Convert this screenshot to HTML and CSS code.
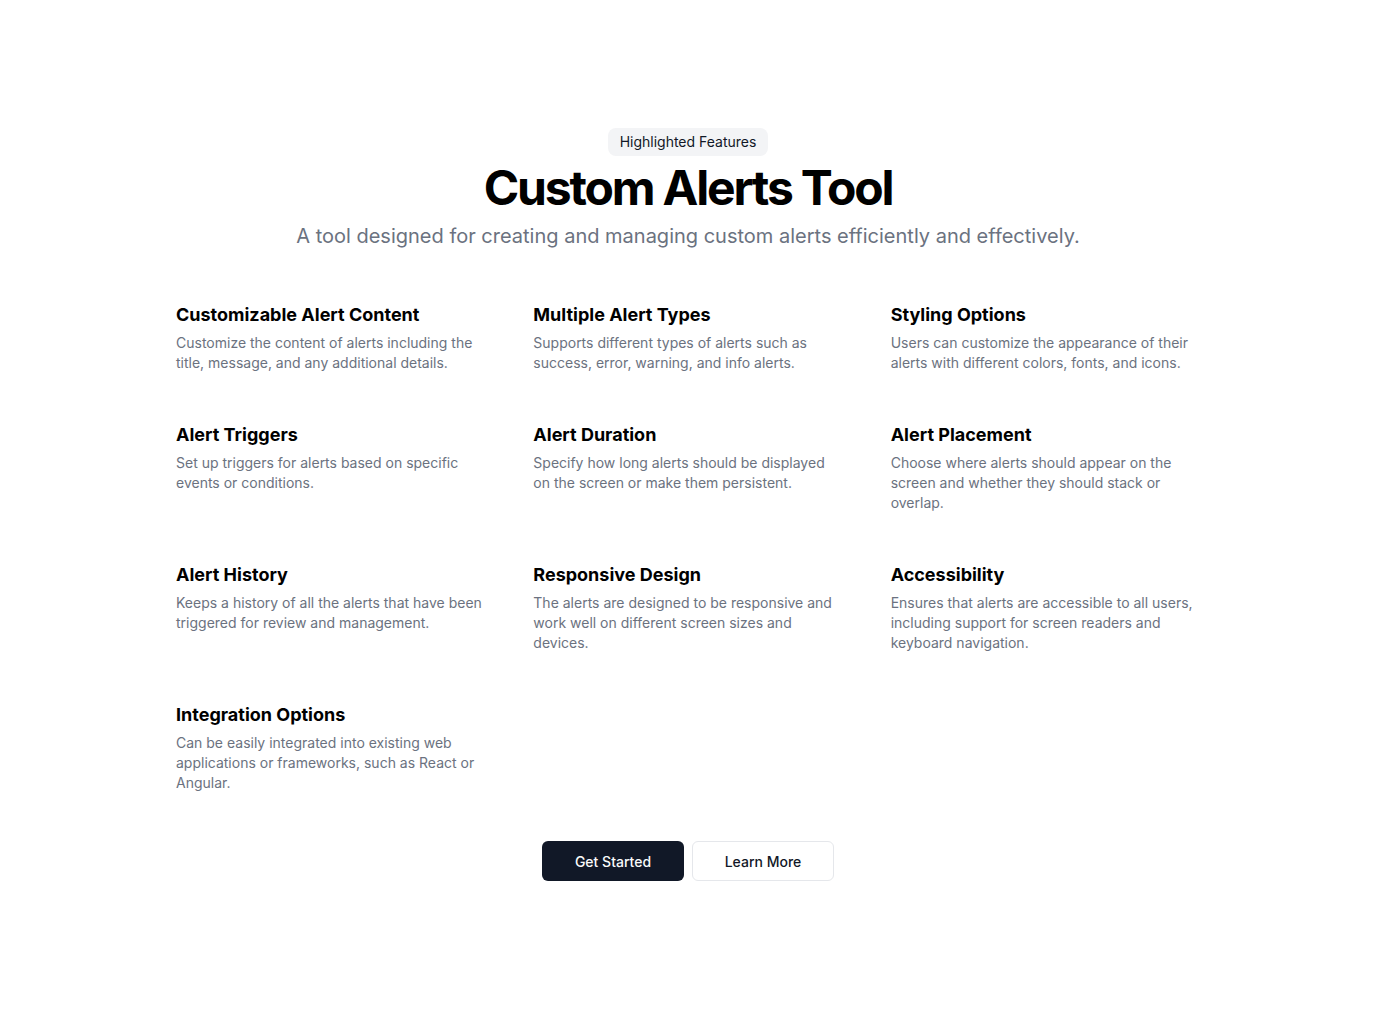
FILE: index.html
```html
<!DOCTYPE html>
<html lang="en">
<head>
<meta charset="utf-8">
<title>Custom Alerts Tool</title>
<link rel="stylesheet" href="styles.css">
</head>
<body>
<section class="section">
  <div class="container">
    <header class="header">
      <span class="badge">Highlighted Features</span>
      <h1 class="title">Custom Alerts Tool</h1>
      <p class="subtitle">A tool designed for creating and managing custom alerts efficiently and effectively.</p>
    </header>
    <div class="grid">
      <div class="feature">
        <h3 class="feature-title">Customizable Alert Content</h3>
        <p class="feature-text">Customize the content of alerts including the title, message, and any additional details.</p>
      </div>
      <div class="feature">
        <h3 class="feature-title">Multiple Alert Types</h3>
        <p class="feature-text">Supports different types of alerts such as success, error, warning, and info alerts.</p>
      </div>
      <div class="feature">
        <h3 class="feature-title">Styling Options</h3>
        <p class="feature-text">Users can customize the appearance of their alerts with different colors, fonts, and icons.</p>
      </div>
      <div class="feature">
        <h3 class="feature-title">Alert Triggers</h3>
        <p class="feature-text">Set up triggers for alerts based on specific events or conditions.</p>
      </div>
      <div class="feature">
        <h3 class="feature-title">Alert Duration</h3>
        <p class="feature-text">Specify how long alerts should be displayed on the screen or make them persistent.</p>
      </div>
      <div class="feature">
        <h3 class="feature-title">Alert Placement</h3>
        <p class="feature-text">Choose where alerts should appear on the screen and whether they should stack or overlap.</p>
      </div>
      <div class="feature">
        <h3 class="feature-title">Alert History</h3>
        <p class="feature-text">Keeps a history of all the alerts that have been triggered for review and management.</p>
      </div>
      <div class="feature">
        <h3 class="feature-title">Responsive Design</h3>
        <p class="feature-text">The alerts are designed to be responsive and work well on different screen sizes and devices.</p>
      </div>
      <div class="feature">
        <h3 class="feature-title">Accessibility</h3>
        <p class="feature-text">Ensures that alerts are accessible to all users, including support for screen readers and keyboard navigation.</p>
      </div>
      <div class="feature">
        <h3 class="feature-title">Integration Options</h3>
        <p class="feature-text">Can be easily integrated into existing web applications or frameworks, such as React or Angular.</p>
      </div>
    </div>
    <div class="actions">
      <a class="btn btn-primary" href="#">Get Started</a>
      <a class="btn btn-outline" href="#">Learn More</a>
    </div>
  </div>
</section>
</body>
</html>
```
FILE: styles.css
```css
* { box-sizing: border-box; }
html, body { margin: 0; padding: 0; background: #fff; }
body {
  font-family: Inter, "Noto Sans", "Liberation Sans", sans-serif;
  color: #030712;
}
.section { padding: 128px 0; }
.container {
  width: 1024px;
  margin: 0 auto;
}
.header {
  display: flex;
  flex-direction: column;
  align-items: center;
  text-align: center;
  gap: 8px;
}
.badge {
  display: inline-block;
  background: #f3f4f6;
  border-radius: 8px;
  padding: 4px 12px;
  font-size: 14px;
  line-height: 20px;
  color: #111827;
}
.title {
  margin: 0;
  font-size: 48px;
  line-height: 48px;
  font-weight: 700;
  letter-spacing: -0.045em;
  color: #000;
}
.subtitle {
  margin: 2px 0 0;
  font-size: 20px;
  line-height: 28px;
  color: #6b7280;
  width: 900px;
}
.grid {
  margin-top: 51px;
  display: grid;
  grid-template-columns: repeat(3, 1fr);
  gap: 48px;
}
.feature {
  display: flex;
  flex-direction: column;
  gap: 4px;
}
.feature-title {
  margin: 0;
  font-size: 18px;
  line-height: 28px;
  font-weight: 700;
  color: #000;
}
.feature-text {
  margin: 0;
  font-size: 14px;
  line-height: 20px;
  color: #6b7280;
}
.actions {
  margin-top: 48px;
  display: flex;
  justify-content: center;
  gap: 8px;
}
.btn {
  display: inline-flex;
  align-items: center;
  justify-content: center;
  height: 40px;
  width: 142px;
  padding: 0 16px;
  border-radius: 6px;
  font-size: 14px;
  font-weight: 500;
  white-space: nowrap;
  text-decoration: none;
}
.btn-primary {
  background: #111827;
  color: #f9fafb;
}
.btn-outline {
  background: #fff;
  border: 1px solid #e5e7eb;
  color: #111827;
}
```
